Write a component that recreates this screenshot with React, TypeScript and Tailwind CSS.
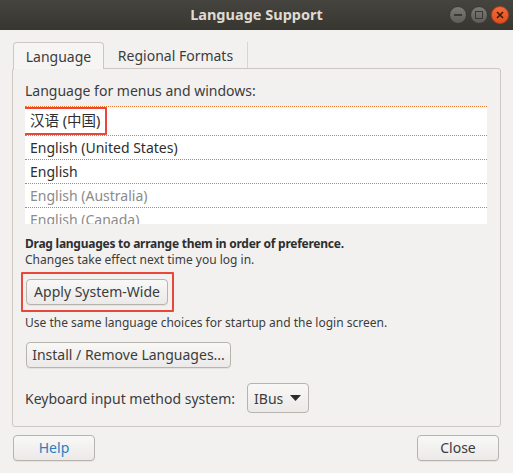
import React from "react";

const font = "font-['Noto_Sans','Noto_Sans_CJK_SC',sans-serif]";

const GtkButton = ({
  label,
  className = "",
  textClass = "text-[#3c3c3c]",
}: {
  label: string;
  className?: string;
  textClass?: string;
}) => (
  <div
    className={`flex items-center justify-center rounded-[4px] border border-[#b8b3ad] bg-gradient-to-b from-[#f8f8f7] to-[#eceae8] shadow-[0_1px_0_rgba(0,0,0,0.06)] ${className}`}
  >
    <span className={`text-[14px] leading-none ${textClass}`}>{label}</span>
  </div>
);

const TitleButton = ({ kind }: { kind: "min" | "max" | "close" }) => {
  const isClose = kind === "close";
  return (
    <div
      className={`w-[18px] h-[18px] rounded-full flex items-center justify-center border ${
        isClose
          ? "bg-gradient-to-b from-[#f26b3a] to-[#e2501c] border-[#b9401a]"
          : "bg-gradient-to-b from-[#7c7a74] to-[#5f5d58] border-[#3a3935]"
      }`}
    >
      {kind === "min" && <div className="w-[8px] h-[2px] bg-[#3a3935]" />}
      {kind === "max" && <div className="w-[8px] h-[8px] border-[1.5px] border-[#3a3935]" />}
      {kind === "close" && (
        <svg width="8" height="8" viewBox="0 0 8 8">
          <path d="M1 1L7 7M7 1L1 7" stroke="#3b1a0c" strokeWidth="1.6" />
        </svg>
      )}
    </div>
  );
};

const rows = [
  { text: "English (United States)", cls: "text-[#2e2e2e]" },
  { text: "English", cls: "text-[#2e2e2e]" },
  { text: "English (Australia)", cls: "text-[#8b8b8b]" },
  { text: "English (Canada)", cls: "text-[#8b8b8b]" },
];

export default function App() {
  return (
    <div className={`w-[513px] h-[473px] bg-[#f2f1f0] flex flex-col ${font} text-[#3c3c3c]`}>
      {/* title bar */}
      <div className="relative h-[30px] bg-gradient-to-b from-[#46443f] to-[#37362f] flex items-center justify-center">
        <span className="text-[14.5px] font-bold text-[#dfdbd2]">Language Support</span>
        <div className="absolute right-[4px] top-[6px] flex gap-[3px]">
          <TitleButton kind="min" />
          <TitleButton kind="max" />
          <TitleButton kind="close" />
        </div>
      </div>

      {/* tabs */}
      <div className="pt-[12px] pl-[13px] flex items-end h-[39px]">
        <div className="relative z-10 h-[27px] w-[91px] rounded-t-[4px] border border-b-0 border-[#cdc7c2] bg-[#f6f5f4] flex items-center justify-center">
          <span className="text-[14px]">Language</span>
        </div>
        <div className="h-[27px] w-[144px] flex items-center justify-center border-r border-[#d8d4d0]">
          <span className="text-[14px]">Regional Formats</span>
        </div>
      </div>

      {/* notebook page */}
      <div className="ml-[12px] w-[489px] h-[359px] -mt-px border border-[#cdc7c2] rounded-[3px] flex flex-col pl-[12px]">
        <div className="mt-[12px] text-[14px] leading-[20px]">Language for menus and windows:</div>

        <div className="mt-[5px] w-[462px] h-[118px] bg-white overflow-hidden relative border-t border-dotted border-[#f2752f]">
          <div className="relative h-[29px] border-b border-dotted border-[#f2752f] flex items-center pl-[5px]">
            <span className="text-[14.5px] text-[#2e2e2e]">汉语 (中国)</span>
            <div className="absolute -left-[2px] top-0 w-[84px] h-[28px] border-2 border-[#e9473a] rounded-[1px]" />
          </div>
          {rows.map((r) => (
            <div
              key={r.text}
              className="h-[24px] border-b border-dotted border-[#f2752f] flex items-center pl-[5px]"
            >
              <span className={`text-[14px] ${r.cls}`}>{r.text}</span>
            </div>
          ))}
        </div>

        <div className="mt-[12px] text-[12px] leading-[16px] font-bold tracking-[-0.25px] text-[#2e2e2e]">
          Drag languages to arrange them in order of preference.
        </div>
        <div className="text-[12px] leading-[16px]">Changes take effect next time you log in.</div>

        <div className="mt-[4px] -ml-[4px] w-[153px] h-[40px] border-2 border-[#e9473a] rounded-[1px] flex items-center pl-[3px]">
          <GtkButton label="Apply System-Wide" className="w-[142px] h-[26px]" />
        </div>

        <div className="mt-[3px] text-[12px] leading-[15px]">
          Use the same language choices for startup and the login screen.
        </div>

        <GtkButton label="Install / Remove Languages..." className="mt-[12px] ml-[1px] w-[205px] h-[26px]" />

        <div className="mt-[15px] flex items-center">
          <span className="text-[14px]">Keyboard input method system:</span>
          <div className="ml-[12px] w-[62px] h-[30px] rounded-[4px] border border-[#b8b3ad] bg-gradient-to-b from-[#f8f8f7] to-[#eceae8] flex items-center pl-[6px] pr-[7px]">
            <span className="text-[14px] text-[#3c3c3c]">IBus</span>
            <svg className="ml-auto" width="11" height="6" viewBox="0 0 11 6">
              <path d="M0 0H11L5.5 6Z" fill="#2b2b2b" />
            </svg>
          </div>
        </div>
      </div>

      {/* dialog buttons */}
      <div className="mt-[8px] px-[13px] flex justify-between pr-[14px]">
        <GtkButton label="Help" className="w-[82px] h-[26px]" textClass="text-[#2a7fc0]" />
        <GtkButton label="Close" className="w-[82px] h-[26px]" />
      </div>
    </div>
  );
}
